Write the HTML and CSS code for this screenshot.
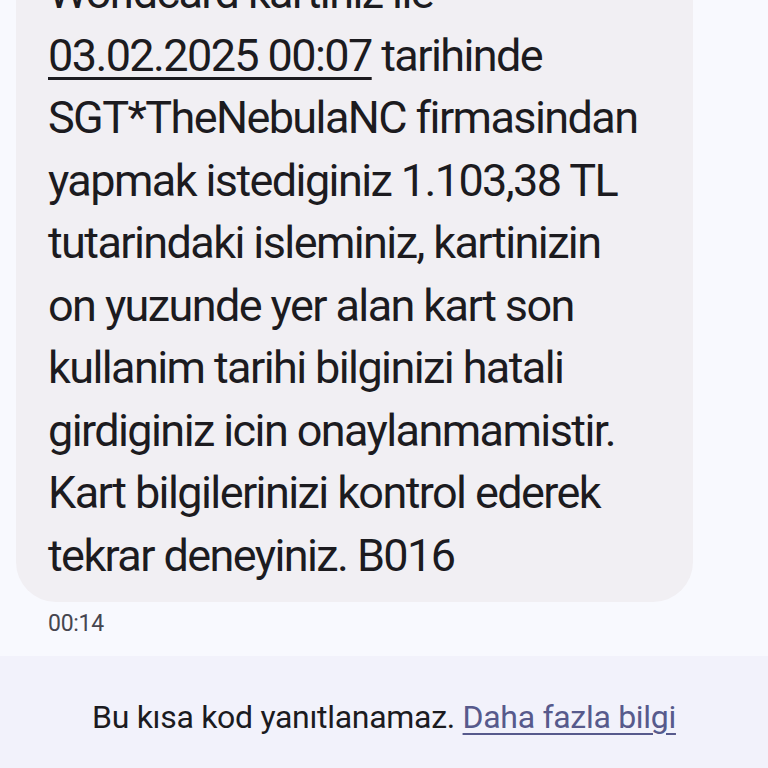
FILE: index.html
```html
<!DOCTYPE html>
<html lang="tr">
<head>
<meta charset="utf-8">
<title>Mesaj</title>
<link rel="stylesheet" href="styles.css">
</head>
<body>
<div class="screen">
  <main class="thread">
    <div class="bubble">
      <p class="msg">Worldcard kartiniz ile<br><span class="date">03.02.2025 00:07</span> tarihinde<br>SGT*TheNebulaNC firmasindan<br>yapmak istediginiz 1.103,38 TL<br>tutarindaki isleminiz, kartinizin<br>on yuzunde yer alan kart son<br>kullanim tarihi bilginizi hatali<br>girdiginiz icin onaylanmamistir.<br>Kart bilgilerinizi kontrol ederek<br>tekrar deneyiniz. B016</p>
    </div>
    <div class="time">00:14</div>
  </main>
  <footer class="footer">
    <p class="note">Bu kısa kod yanıtlanamaz. <a class="link" href="#">Daha fazla bilgi</a></p>
  </footer>
</div>
</body>
</html>
```
FILE: styles.css
```css
html, body {
  margin: 0;
  padding: 0;
  height: 100%;
  overflow: hidden;
}
body {
  background: #f8f9fe;
  font-family: Roboto, "Noto Sans", sans-serif;
  color: #1b1b1f;
}
.screen {
  height: 768px;
  display: flex;
  flex-direction: column;
}
.thread {
  padding: 0 75px 0 16px;
  flex: 0 0 auto;
  height: 656px;
  display: flex;
  flex-direction: column;
  justify-content: flex-end;
  overflow: hidden;
}
.bubble {
  background: #f1eff3;
  border-radius: 40px;
  padding: 0 32px 15px;
  flex: 0 0 auto;
}
.msg {
  margin: 0;
  font-size: 45px;
  line-height: 62.5px;
  letter-spacing: -1.6px;
  white-space: nowrap;
  color: #1c1b1f;
}
.date {
  text-decoration: underline;
  text-decoration-thickness: 3px;
  text-underline-offset: 6px;
}
.time {
  padding: 10px 0 20px 32px;
  font-size: 23px;
  line-height: 24px;
  letter-spacing: -0.3px;
  color: #46464f;
}
.footer {
  flex: 1;
  background: #f2f2fb;
  display: flex;
  justify-content: center;
  align-items: center;
  padding-top: 10px;
}
.note {
  margin: 0;
  font-size: 32px;
  letter-spacing: -0.3px;
  color: #1b1b1f;
}
.link {
  color: #575a8c;
  text-decoration: underline;
  text-decoration-thickness: 2px;
  text-underline-offset: 5px;
}
```
